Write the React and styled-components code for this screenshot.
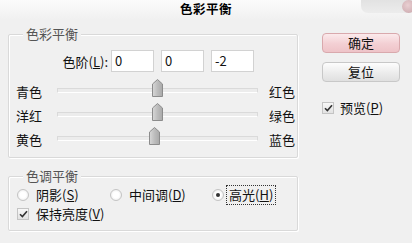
import React from 'react';
import styled, { createGlobalStyle } from 'styled-components';

const GlobalStyle = createGlobalStyle`
  body {
    margin: 0;
    background: #f0f0f0;
    font-family: "Noto Sans CJK SC", "Liberation Sans", sans-serif;
  }
`;

const Dialog = styled.div`
  width: 412px;
  height: 243px;
  background: #f0f0f0;
  font-size: 13px;
  color: #111;
  overflow: hidden;
`;

const TitleBar = styled.div`
  height: 20px;
  display: grid;
  grid-template-columns: 1fr auto 1fr;
  align-items: start;
  background: linear-gradient(#fbfbfb, #f0f0f0);
`;

const Title = styled.div`
  font-weight: bold;
  font-size: 12.5px;
  line-height: 18px;
  letter-spacing: 0.5px;
  color: #000;
`;

const WindowControl = styled.div`
  justify-self: end;
  display: flex;
  align-items: center;
  justify-content: flex-end;
  width: 54px;
  height: 13px;
  margin-right: -3px;
  border-radius: 0 0 0 7px;
  background: linear-gradient(#e2e2e2, #ececec);
`;

const CloseDot = styled.div`
  width: 13px;
  height: 13px;
  border-radius: 50%;
  background: radial-gradient(circle at 45% 40%, #e9cfd2, #c9a6ab);
`;

const Body = styled.div`
  display: flex;
  padding-left: 8px;
`;

const LeftColumn = styled.div`
  width: 290px;
  display: flex;
  flex-direction: column;
`;

const Group = styled.div`
  position: relative;
  margin-top: ${p => p.$top}px;
  padding: ${p => p.$pad};
  border: 1px solid #d9d9d9;
  box-shadow: inset 1px 1px 0 #fff, 1px 1px 0 #fff;
  border-radius: 2px;
`;

const Legend = styled.span`
  position: absolute;
  top: -9px;
  left: 14px;
  padding: 0 3px;
  background: #f0f0f0;
  color: #555;
  line-height: 16px;
`;

const LevelsRow = styled.div`
  display: flex;
  align-items: center;
  height: 22px;
  margin-bottom: 7px;
`;

const LevelsLabel = styled.span`
  width: 92px;
  margin-left: 7px;
  margin-right: 3px;
  text-align: right;
`;

const Input = styled.div`
  width: 38px;
  height: 20px;
  margin-right: 7px;
  padding-left: 3px;
  border: 1px solid #d2d2d2;
  background: #fff;
  line-height: 20px;
`;

const Key = styled.span`
  text-decoration: underline;
`;

const SliderRow = styled.div`
  display: flex;
  align-items: center;
  height: 24px;
  padding-left: 7px;
`;

const SideLabel = styled.span`
  width: ${p => p.$w}px;
  flex: none;
`;

const Track = styled.div`
  position: relative;
  width: 201px;
  height: 3px;
  margin-top: -2px;
  margin-right: 11px;
  border: 1px solid #dadada;
  border-bottom-color: #fff;
  background: #ececec;
`;

const Thumb = styled.svg`
  position: absolute;
  top: -10px;
  width: 11px;
  height: 18px;
`;

const RadioRow = styled.div`
  display: grid;
  grid-template-columns: 93px 102px auto;
  align-items: center;
  height: 20px;
  padding-left: 8px;
`;

const Option = styled.label`
  display: flex;
  align-items: center;
  gap: 5px;
`;

const OptionText = styled.span`
  padding: 0 2px;
  line-height: 18px;
  outline: ${p => (p.$focus ? '1px dotted #333' : 'none')};
  margin-left: ${p => (p.$focus ? '-2px' : '0')};
`;

const Radio = styled.span`
  width: 10px;
  height: 10px;
  border-radius: 50%;
  border: 1px solid #c4c4c4;
  background: radial-gradient(circle, #fff 40%, #e4e4e4);
  display: flex;
  align-items: center;
  justify-content: center;
  &::after {
    content: '';
    width: 4px;
    height: 4px;
    border-radius: 50%;
    background: ${p => (p.$on ? '#333' : 'transparent')};
  }
`;

const CheckBox = styled.span`
  width: 10px;
  height: 10px;
  border: 1px solid #c4c4c4;
  background: linear-gradient(#f8f8f8, #e2e2e2);
  display: flex;
  align-items: center;
  justify-content: center;
`;

const CheckRow = styled.div`
  display: flex;
  align-items: center;
  height: 18px;
  padding-left: 8px;
`;

const RightColumn = styled.div`
  width: 78px;
  margin-left: 24px;
  padding-top: 13px;
  display: flex;
  flex-direction: column;
`;

const Button = styled.div`
  height: 18px;
  margin-bottom: ${p => p.$mb}px;
  border: 1px solid ${p => (p.$primary ? '#d9a9ad' : '#c8c8c8')};
  border-radius: 4px;
  background: ${p =>
    p.$primary
      ? 'linear-gradient(#fbeaec, #f3cfd3 55%, #eec3c8)'
      : 'linear-gradient(#fdfdfd, #ececec 55%, #e0e0e0)'};
  text-align: center;
  line-height: 18px;
  color: #111;
`;

const PreviewRow = styled.div`
  display: flex;
  align-items: center;
  gap: 6px;
  margin-top: 16px;
`;

const Check = () => (
  <svg width="9" height="8" viewBox="0 0 9 8">
    <path d="M1 4.2 L3.4 6.6 L8 1.2" fill="none" stroke="#333" strokeWidth="1.6" />
  </svg>
);

const sliders = [
  { left: '青色', right: '红色', value: 0 },
  { left: '洋红', right: '绿色', value: 0 },
  { left: '黄色', right: '蓝色', value: -2 },
];

const SliderThumb = ({ value }) => {
  const x = ((value + 100) / 200) * 201 - 7;
  return (
    <Thumb viewBox="0 0 11 18" style={{ left: x }}>
      <defs>
        <linearGradient id={`tg${value}`} x1="0" y1="0" x2="1" y2="0">
          <stop offset="0" stopColor="#d8d8d8" />
          <stop offset="0.5" stopColor="#bdbdbd" />
          <stop offset="1" stopColor="#a9a9a9" />
        </linearGradient>
      </defs>
      <polygon
        points="0.5,5 5.5,0.5 10.5,5 10.5,17.5 0.5,17.5"
        fill={`url(#tg${value})`}
        stroke="#8c8c8c"
      />
    </Thumb>
  );
};

const App = () => {
  return (
    <Dialog>
      <GlobalStyle />
      <TitleBar>
        <span />
        <Title>色彩平衡</Title>
        <WindowControl>
          <CloseDot />
        </WindowControl>
      </TitleBar>
      <Body>
        <LeftColumn>
          <Group $top={14} $pad="15px 0 6px 0">
            <Legend>色彩平衡</Legend>
            <LevelsRow>
              <LevelsLabel>
                色阶(<Key>L</Key>):
              </LevelsLabel>
              <Input>0</Input>
              <Input>0</Input>
              <Input>-2</Input>
            </LevelsRow>
            {sliders.map(s => (
              <SliderRow key={s.left}>
                <SideLabel $w={41}>{s.left}</SideLabel>
                <Track>
                  <SliderThumb value={s.value} />
                </Track>
                <SideLabel $w={28}>{s.right}</SideLabel>
              </SliderRow>
            ))}
          </Group>
          <Group $top={18} $pad="8px 0 7px 0">
            <Legend>色调平衡</Legend>
            <RadioRow>
              <Option>
                <Radio />
                <OptionText>
                  阴影(<Key>S</Key>)
                </OptionText>
              </Option>
              <Option>
                <Radio />
                <OptionText>
                  中间调(<Key>D</Key>)
                </OptionText>
              </Option>
              <Option>
                <Radio $on />
                <OptionText $focus>
                  高光(<Key>H</Key>)
                </OptionText>
              </Option>
            </RadioRow>
            <CheckRow>
              <Option>
                <CheckBox>
                  <Check />
                </CheckBox>
                <OptionText>
                  保持亮度(<Key>V</Key>)
                </OptionText>
              </Option>
            </CheckRow>
          </Group>
        </LeftColumn>
        <RightColumn>
          <Button $primary $mb={9}>确定</Button>
          <Button $mb={0}>复位</Button>
          <PreviewRow>
            <CheckBox>
              <Check />
            </CheckBox>
            <span>
              预览(<Key>P</Key>)
            </span>
          </PreviewRow>
        </RightColumn>
      </Body>
    </Dialog>
  );
};

export default App;
